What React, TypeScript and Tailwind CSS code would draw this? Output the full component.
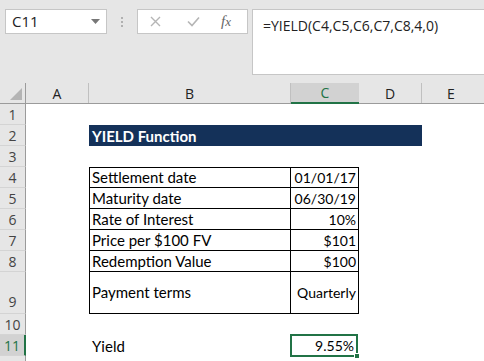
import React from "react";

const cellFont = { fontFamily: "Lato, 'Open Sans', sans-serif" };

function RowHead({ n, h, selected, bottom }: { n?: number; h: string; selected?: boolean; bottom?: boolean }) {
  return (
    <div
      className={`w-[26px] shrink-0 ${h} flex justify-center text-[14px] border-b border-[#d4d4d4] ${
        selected ? "bg-[#d2d2d2] text-[#217346] border-r-2 border-r-[#217346]" : "bg-[#e6e6e6] text-[#444] border-r border-r-[#9b9b9b]"
      } ${bottom ? "items-end pb-[1px]" : "items-center"}`}
      style={{ fontFamily: "'Open Sans', sans-serif" }}
    >
      {n}
    </div>
  );
}

function Row({ n, h = "h-[21px]", selected, bottom, children }: { n?: number; h?: string; selected?: boolean; bottom?: boolean; children?: React.ReactNode }) {
  return (
    <div className={`flex ${h}`}>
      <RowHead n={n} h={h} selected={selected} bottom={bottom} />
      <div className="flex flex-1 bg-white text-[15px] text-black" style={cellFont}>
        {children}
      </div>
    </div>
  );
}

function Blank() {
  return <div className="flex-1" />;
}

function TableRow({ label, value, first, tall }: { label: string; value: string; first?: boolean; tall?: boolean }) {
  return (
    <>
      <div className="w-[63px] shrink-0" />
      <div
        className={`w-[202px] shrink-0 border-l border-r border-b border-black ${first ? "border-t" : ""} flex ${
          tall ? "items-center" : "items-end"
        } pl-[2px] leading-[19px]`}
      >
        {label}
      </div>
      <div
        className={`w-[68px] shrink-0 border-r border-b border-black ${first ? "border-t" : ""} flex justify-end ${
          tall ? "items-center" : "items-end"
        } pr-[2px] leading-[19px] text-[14px]`}
      >
        {value}
      </div>
      <Blank />
    </>
  );
}

export default function App() {
  return (
    <div className="w-[484px] h-[361px] overflow-hidden bg-[#e6e6e6] select-none">
      {/* formula bar */}
      <div className="h-[83px] relative">
        <div className="flex items-start pt-[9px] pl-[5px]">
          <div className="w-[102px] h-[25px] bg-white border border-[#c6c6c6] flex items-center justify-between pl-[6px] pr-[6px]">
            <span className="text-[15px] text-[#222]" style={{ fontFamily: "'Open Sans', sans-serif" }}>
              C11
            </span>
            <svg width="9" height="5" viewBox="0 0 9 5">
              <path d="M0 0h9L4.5 5z" fill="#777" />
            </svg>
          </div>
          <div className="w-[30px] h-[25px] flex flex-col items-center justify-center gap-[2px]">
            <span className="w-[2px] h-[2px] bg-[#b0b0b0]" />
            <span className="w-[2px] h-[2px] bg-[#b0b0b0]" />
            <span className="w-[2px] h-[2px] bg-[#b0b0b0]" />
          </div>
          <div className="w-[111px] h-[25px] bg-white border border-[#c6c6c6] flex items-center">
            <svg className="ml-[12px]" width="11" height="11" viewBox="0 0 11 11">
              <path d="M1 1l9 9M10 1l-9 9" stroke="#b5b5b5" strokeWidth="1.4" />
            </svg>
            <svg className="ml-[26px]" width="13" height="11" viewBox="0 0 13 11">
              <path d="M1 5.5l4 4L12 1.5" stroke="#b5b5b5" strokeWidth="1.6" fill="none" />
            </svg>
            <span
              className="ml-[21px] text-[15px] italic text-[#666]"
              style={{ fontFamily: "'Liberation Serif', serif" }}
            >
              <i>f</i>
              <span className="text-[13px]">x</span>
            </span>
          </div>
          <div className="ml-[4px] flex-1 h-[66px] bg-white border border-[#c6c6c6] border-r-0 pl-[10px] pt-[3px]">
            <span className="text-[14px] text-[#222]" style={{ fontFamily: "'Open Sans', sans-serif" }}>
              =YIELD(C4,C5,C6,C7,C8,4,0)
            </span>
          </div>
        </div>
      </div>

      {/* column headers */}
      <div
        className="flex h-[21px] border-b border-[#9b9b9b] text-[14px] text-[#222]"
        style={{ fontFamily: "'Open Sans', sans-serif" }}
      >
        <div className="w-[26px] shrink-0 border-r border-[#9b9b9b] relative">
          <svg className="absolute right-[3px] bottom-[3px]" width="12" height="12" viewBox="0 0 12 12">
            <path d="M12 0v12H0z" fill="#b4b4b4" />
          </svg>
        </div>
        <div className="w-[63px] shrink-0 border-r border-[#c0c0c0] flex items-center justify-center">A</div>
        <div className="w-[202px] shrink-0 border-r border-[#c0c0c0] flex items-center justify-center">B</div>
        <div className="w-[68px] shrink-0 bg-[#d2d2d2] text-[#217346] border-b-2 border-[#217346] flex items-center justify-center -mb-[1px]">
          C
        </div>
        <div className="w-[63px] shrink-0 border-r border-[#c0c0c0] flex items-center justify-center">D</div>
        <div className="flex-1 flex items-center justify-center pr-[4px]">E</div>
      </div>

      <Row n={1} />
      <Row n={2}>
        <div className="w-[63px] shrink-0" />
        <div className="w-[333px] shrink-0 bg-[#143159] text-white font-bold flex items-end pl-[3px] leading-[20px]">
          YIELD Function
        </div>
        <Blank />
      </Row>
      <Row n={3} />
      <Row n={4}>
        <TableRow label="Settlement date" value="01/01/17" first />
      </Row>
      <Row n={5}>
        <TableRow label="Maturity date" value="06/30/19" />
      </Row>
      <Row n={6}>
        <TableRow label="Rate of Interest" value="10%" />
      </Row>
      <Row n={7}>
        <TableRow label="Price per $100 FV" value="$101" />
      </Row>
      <Row n={8}>
        <TableRow label="Redemption Value" value="$100" />
      </Row>
      <Row n={9} h="h-[42px]" bottom>
        <TableRow label="Payment terms" value="Quarterly" tall />
      </Row>
      <Row n={10} />
      <Row n={11} selected>
        <div className="w-[63px] shrink-0" />
        <div className="w-[202px] shrink-0 flex items-end pl-[3px] leading-[19px]">Yield</div>
        <div className="w-[68px] shrink-0 relative -ml-[1px] -mt-[1px] h-[23px] border-2 border-[#217346] flex items-end justify-end pr-[2px] leading-[19px] text-[14px]">
          9.55%
          <span className="absolute -right-[4px] -bottom-[4px] w-[6px] h-[6px] bg-[#217346] border border-white" />
        </div>
        <Blank />
      </Row>
      <Row />
    </div>
  );
}
